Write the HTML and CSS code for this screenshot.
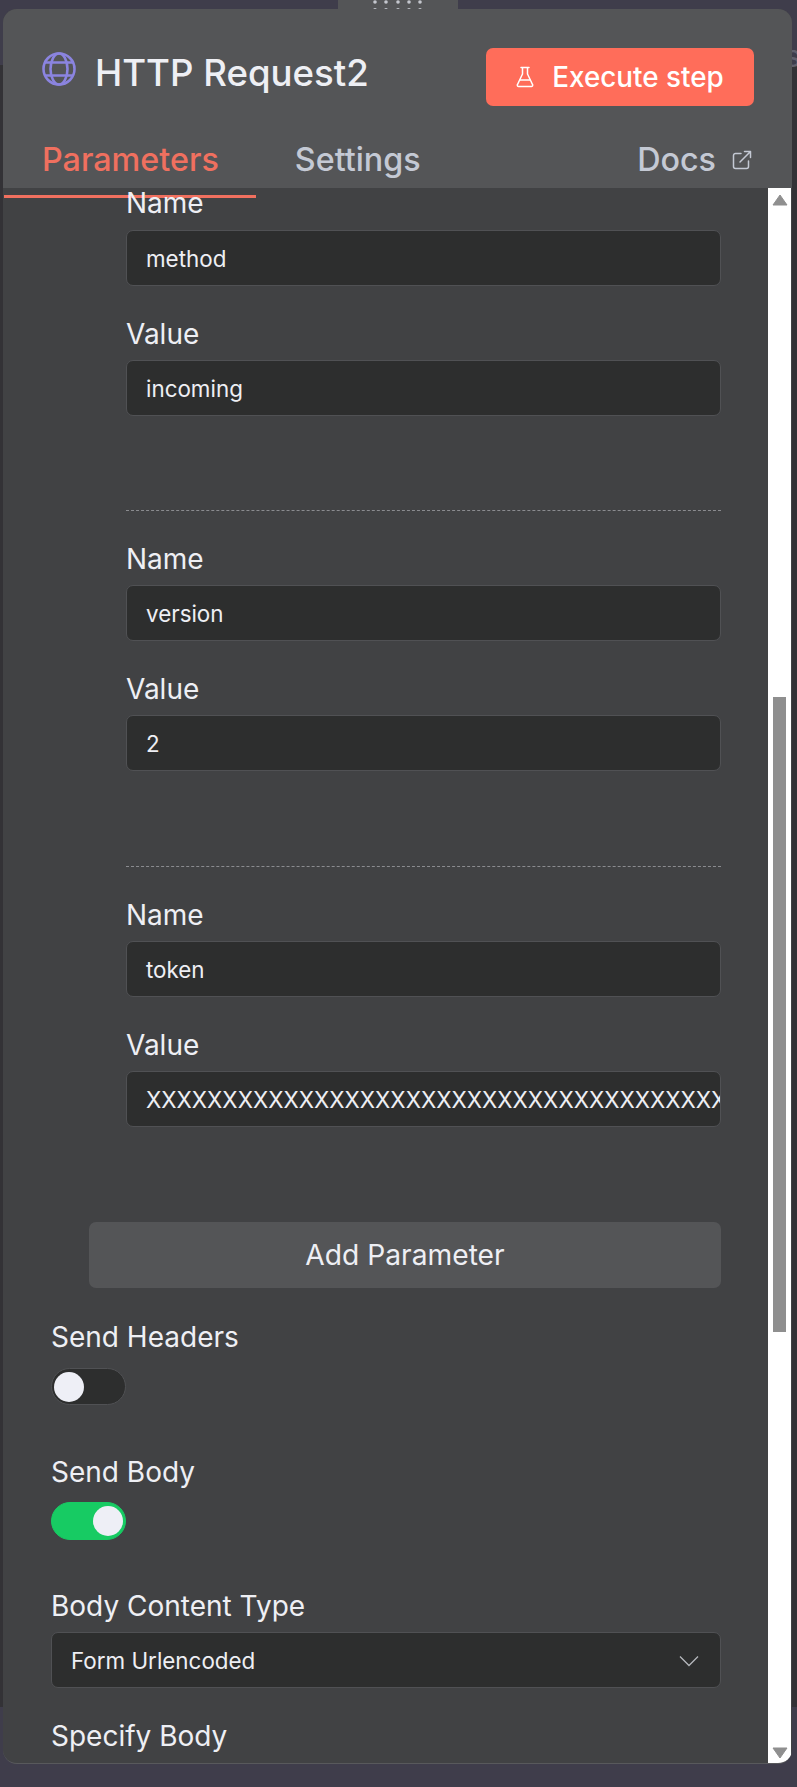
FILE: index.html
```html
<!DOCTYPE html>
<html lang="en">
<head>
<meta charset="utf-8">
<title>HTTP Request2</title>
<link rel="stylesheet" href="styles.css">
</head>
<body>
<span class="behind">s</span>
<div class="handle">
  <svg class="handle-dots" width="50" height="12" viewBox="0 0 50 12" fill="#c4c7ce">
    <circle cx="2" cy="2" r="1.8"/><circle cx="13" cy="2" r="1.8"/><circle cx="25" cy="2" r="1.8"/><circle cx="36" cy="2" r="1.8"/><circle cx="47" cy="2" r="1.8"/>
    <circle cx="2" cy="10" r="1.9"/><circle cx="13" cy="10" r="1.9"/><circle cx="25" cy="10" r="1.9"/><circle cx="36" cy="10" r="1.9"/><circle cx="47" cy="10" r="1.9"/>
  </svg>
</div>
<div class="panel">
  <header class="head">
    <div class="title-row">
      <div class="title">
        <svg class="globe" width="34" height="34" viewBox="0 0 34 34" fill="none" stroke="#8b84e0" stroke-width="2.6">
          <circle cx="17" cy="17" r="15.5"/>
          <ellipse cx="17" cy="17" rx="8.500" ry="15.500"/>
          <path d="M3 10.500h28M3 23.500h28"/>
        </svg>
        <span class="title-text">HTTP Request2</span>
      </div>
      <button class="exec">
        <svg width="18" height="22" viewBox="0 0 18 22" fill="none" stroke="#fff" stroke-width="1.5" stroke-linejoin="round" stroke-linecap="round">
          <path d="M5 1.500h8M6.500 1.500v6.500L1.500 18.500a1.300 1.300 0 0 0 1.200 2h12.600a1.300 1.300 0 0 0 1.200-2L11.500 8V1.500"/>
          <path d="M4 14h10"/>
        </svg>
        <span>Execute step</span>
      </button>
    </div>
    <nav class="tabs">
      <span class="tab tab-active">Parameters</span>
      <span class="tab tab-settings">Settings</span>
      <span class="tab tab-docs">Docs
        <svg width="20" height="20" viewBox="0 0 20 20" fill="none" stroke="#c4c9d4" stroke-width="1.500" stroke-linecap="round" stroke-linejoin="round">
          <path d="M9 3.500H3.500a2 2 0 0 0-2 2v11a2 2 0 0 0 2 2h11a2 2 0 0 0 2-2V11"/>
          <path d="M8 12 18.500 1.500M12.500 1.500h6v6"/>
        </svg>
      </span>
    </nav>
  </header>
  <div class="main">
    <div class="content">
      <section class="params">
        <div class="pair pair-first">
          <label class="label">Name</label>
          <div class="input">method</div>
          <label class="label label-value">Value</label>
          <div class="input">incoming</div>
        </div>
        <div class="pair">
          <label class="label">Name</label>
          <div class="input">version</div>
          <label class="label label-value">Value</label>
          <div class="input">2</div>
        </div>
        <div class="pair">
          <label class="label">Name</label>
          <div class="input">token</div>
          <label class="label label-value">Value</label>
          <div class="input input-long">XXXXXXXXXXXXXXXXXXXXXXXXXXXXXXXXXXXXXXXXXXXXXXXXXX</div>
        </div>
      </section>
      <button class="add">Add Parameter</button>
      <div class="field field-headers">
        <label class="label">Send Headers</label>
        <div class="toggle"><span class="knob"></span></div>
      </div>
      <div class="field field-body">
        <label class="label">Send Body</label>
        <div class="toggle toggle-on"><span class="knob"></span></div>
      </div>
      <div class="field field-type">
        <label class="label">Body Content Type</label>
        <div class="input select">
          <span>Form Urlencoded</span>
          <svg width="20" height="12" viewBox="0 0 20 12" fill="none" stroke="#b5b7bc" stroke-width="1.300"><path d="M1 1.500l9 9 9-9"/></svg>
        </div>
      </div>
      <div class="field field-specify">
        <label class="label">Specify Body</label>
      </div>
    </div>
    <div class="scrollbar">
      <svg class="arrow" width="16" height="12" viewBox="0 0 16 12" fill="#8f8f8f"><path d="M8 1l7 10H1z" stroke="#8f8f8f" stroke-linejoin="round"/></svg>
      <div class="track"><div class="thumb"></div></div>
      <svg class="arrow" width="16" height="12" viewBox="0 0 16 12" fill="#8f8f8f"><path d="M8 11L1 1h14z" stroke="#8f8f8f" stroke-linejoin="round"/></svg>
    </div>
  </div>
</div>
</body>
</html>
```
FILE: styles.css
```css
* { box-sizing: border-box; }
html, body { margin: 0; height: 100%; }
body {
  width: 797px;
  height: 1787px;
  overflow: hidden;
  position: relative;
  font-family: Inter, "Liberation Sans", sans-serif;
  color: #eeeff4;
  padding: 9px 5px 24px 3px;
  background:
    linear-gradient(#3f3d4b, #3f3d4b) 0 0 / 100% 65px no-repeat,
    linear-gradient(#3f3d4b, #3f3d4b) 0 1707px / 100% 80px no-repeat,
    #333236;
}
.behind {
  position: absolute;
  left: 785px;
  top: 38px;
  font-size: 30px;
  line-height: 36px;
  color: #62616e;
}
.handle {
  position: absolute;
  top: 0;
  left: 338px;
  width: 120px;
  height: 12px;
  background: #545557;
  display: flex;
  justify-content: center;
}
.handle-dots { display: block; }
.panel {
  position: relative;
  height: 1755px;
  border-radius: 14px;
  overflow: hidden;
  display: flex;
  flex-direction: column;
  background: #414244;
  border-bottom: 1px solid #58595c;
}
.head {
  flex: none;
  height: 179px;
  background: #545557;
  position: relative;
  padding: 0 0 0 39px;
}
.title-row {
  display: flex;
  justify-content: space-between;
  align-items: flex-start;
  padding: 39px 38px 0 0;
}
.title { display: flex; align-items: flex-start; gap: 19px; padding-top: 4px; }
.title-text { font-size: 36.6px; font-weight: 500; line-height: 44px; margin-top: -1px; }
.exec {
  height: 58px;
  width: 268px;
  border: 0;
  border-radius: 7px;
  background: #ff6d5a;
  color: #fff;
  font: 500 27.800px Inter, "Liberation Sans", sans-serif;
  display: flex;
  align-items: center;
  justify-content: center;
  gap: 18px;
}
.tabs {
  display: flex;
  align-items: center;
  margin-top: 34px;
  font-size: 32.300px;
  font-weight: 500;
  color: #c4c9d4;
  padding-right: 40px;
}
.tab { line-height: 40px; white-space: nowrap; }
.tab-active { color: #f0705f; position: relative; }
.tab-active::after {
  content: "";
  position: absolute;
  left: -38px;
  width: 252px;
  top: 55px;
  height: 3px;
  background: #f0705f;
}
.tab-settings { margin-left: 76px; }
.tab-docs { margin-left: auto; display: flex; align-items: center; gap: 16px; }
.main {
  flex: 1;
  min-height: 0;
  display: flex;
  position: relative;
}
.content {
  flex: 1;
  min-width: 0;
  padding: 0 47px 0 48px;
  overflow: hidden;
}
.params { padding-left: 75px; }
.label {
  display: block;
  font-size: 28px;
  line-height: 34px;
  height: 34px;
  margin-bottom: 9px;
  color: #eeeff4;
}
.pair {
  padding: 31px 0 95px;
  border-top: 1px dashed #8a8b8f;
}
.pair-first { margin-top: -2px; padding: 0 0 94px; border-top: 0; }
.pair-first .label:first-child { margin-bottom: 10px; }
.label-value { margin-top: 31px; }
.input {
  height: 56px;
  background: #2d2e2e;
  border: 1px solid #505154;
  border-radius: 7px;
  padding: 0 19px;
  font-size: 22.400px;
  line-height: 55px;
  color: #eeeff4;
  overflow: hidden;
  white-space: nowrap;
}
.input-long { padding-right: 0; }
.add {
  display: block;
  margin: 0 0 0 38px;
  width: 632px;
  height: 66px;
  background: #545557;
  border: 0;
  border-radius: 7px;
  color: #eeeff4;
  font: 400 28.200px Inter, "Liberation Sans", sans-serif;
}
.field-headers { margin-top: 32px; }
.field-headers .label { margin-bottom: 14px; }
.field-body { margin-top: 50px; }
.field-body .label { margin-bottom: 13px; }
.field-type { margin-top: 49px; }
.field-specify { margin-top: 31px; }
.toggle {
  width: 75px;
  height: 37px;
  border-radius: 19px;
  background: #2d2e2e;
  border: 1px solid #505154;
  padding: 0 2px;
  display: flex;
  align-items: center;
}
.knob { width: 30px; height: 30px; border-radius: 50%; background: #eeeff6; }
.toggle-on {
  height: 38px;
  background: #17cb63;
  border-color: #17cb63;
  justify-content: flex-end;
}
.select {
  display: flex;
  justify-content: space-between;
  align-items: center;
  padding-top: 1px;
  padding-right: 21px;
}
.scrollbar {
  flex: none;
  width: 23px;
  margin-right: 1px;
  background: #fff;
  display: flex;
  flex-direction: column;
  align-items: center;
  padding: 6px 0 4px;
}
.arrow { flex: none; display: block; }
.track { flex: 1; width: 13px; padding-top: 491px; }
.thumb { width: 13px; height: 635px; background: #8f8f8f; }
```
